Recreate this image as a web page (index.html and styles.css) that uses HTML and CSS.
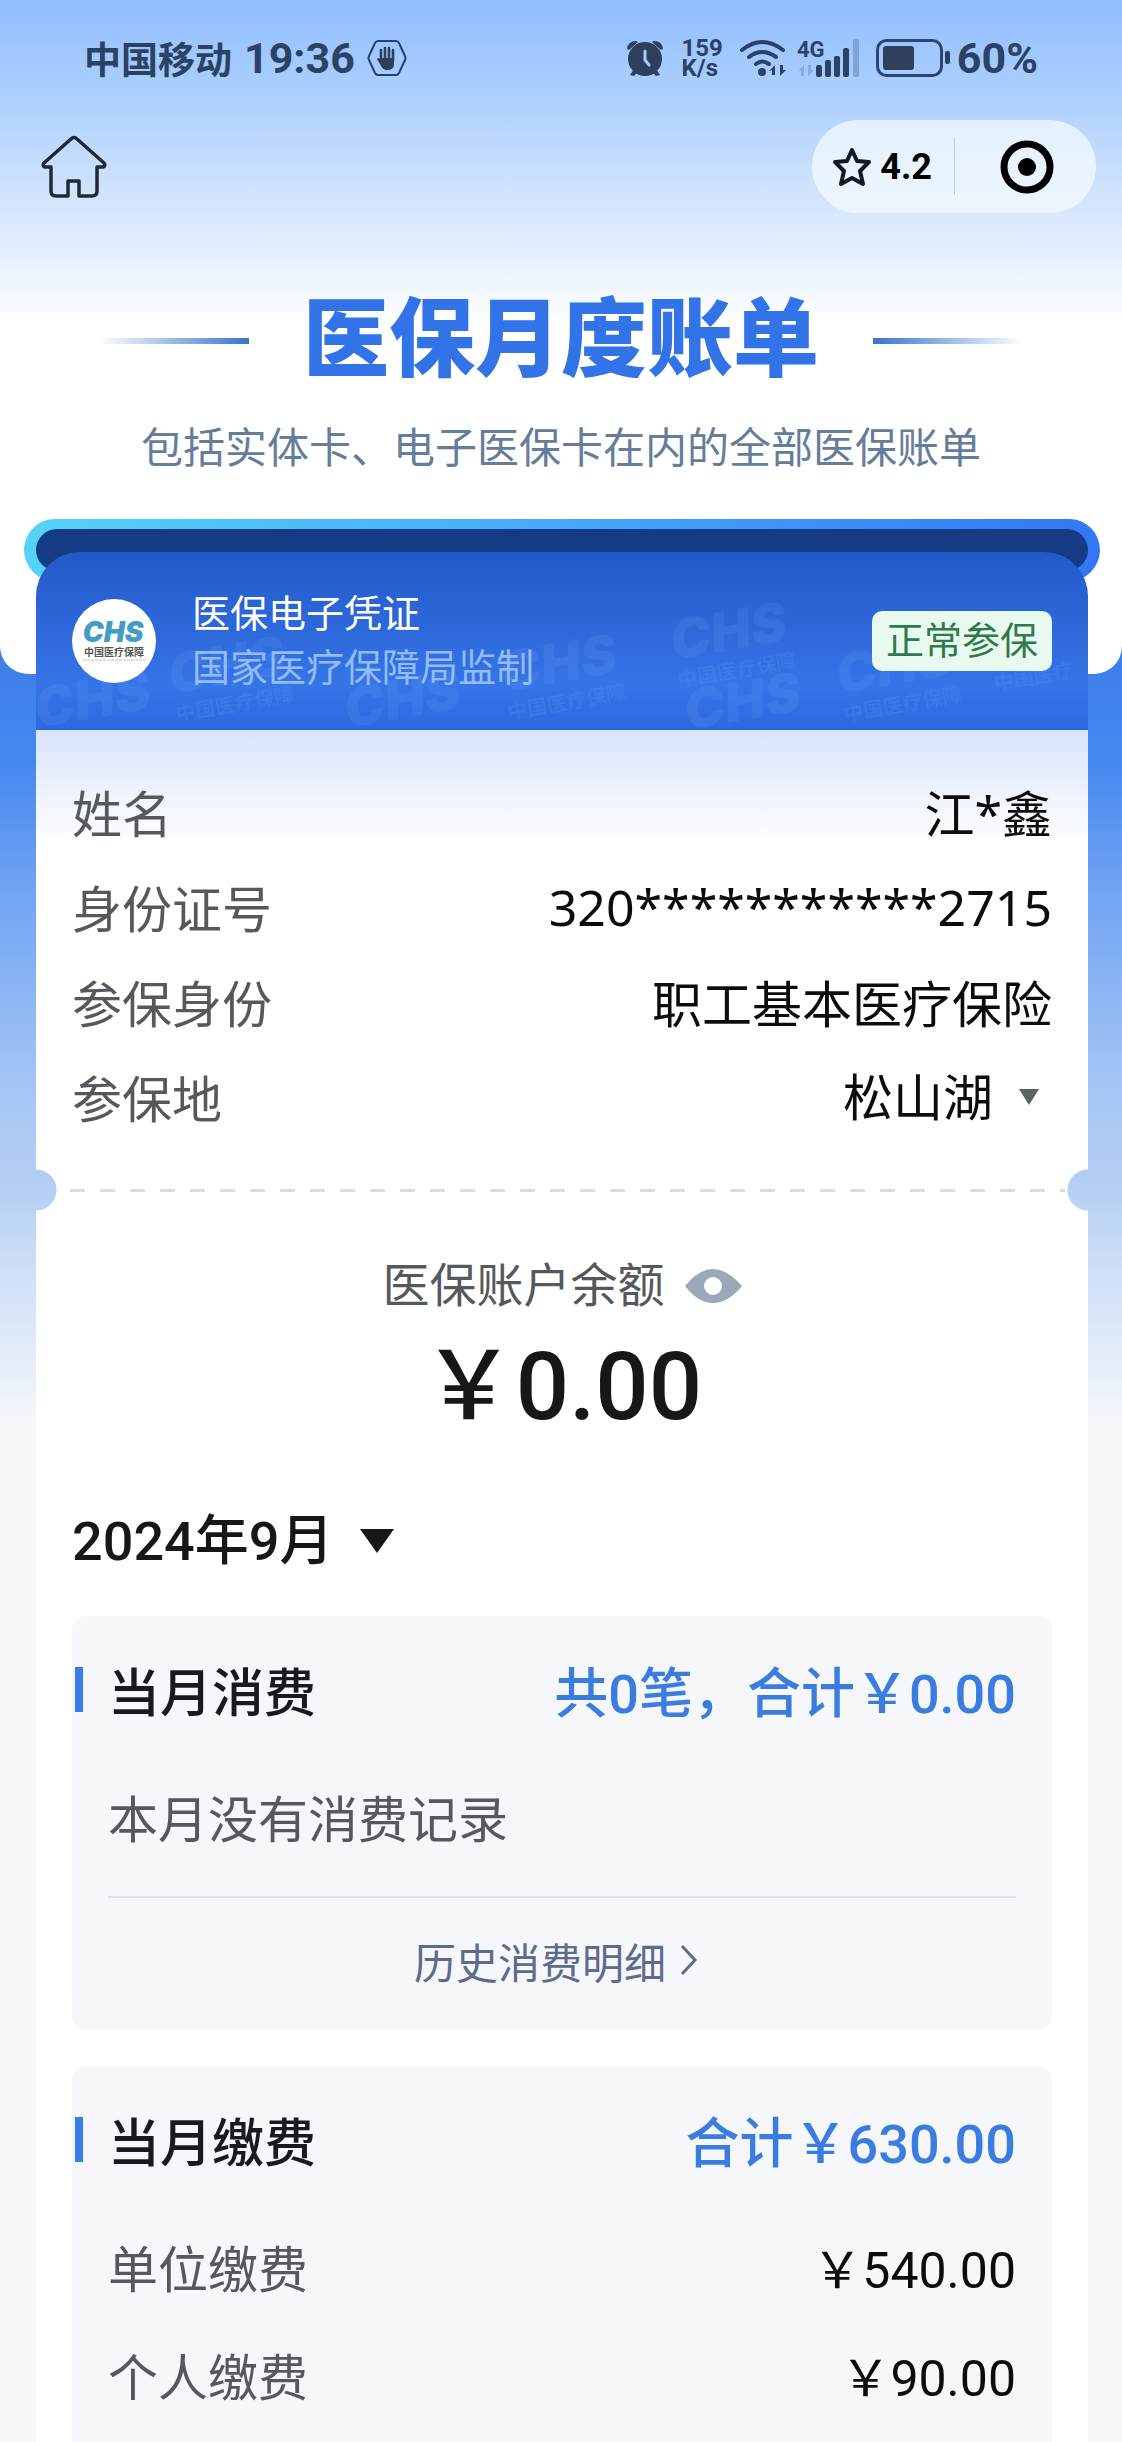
FILE: index.html
```html
<!DOCTYPE html>
<html lang="zh-CN">
<head>
  <meta charset="UTF-8">
  <meta name="viewport" content="width=device-width, initial-scale=1">
  <title>医保月度账单</title>
  <link rel="stylesheet" href="styles.css">
</head>
<body>
  <header class="top">
    <div class="status-bar">
      <span class="carrier">中国移动</span>
      <span class="status-num">19:36</span>
      <svg class="hand-icon" width="40" height="36" viewBox="0 0 40 36">
        <path d="M11 1h18q2 0 3 2l6 13q1 2 0 4l-6 13q-1 2-3 2H11q-2 0-3-2L2 20q-1-2 0-4L8 3q1-2 3-2z" fill="none" stroke="#26416e" stroke-width="2"/>
        <path d="M14 21V10M18 19V8M22 19V8M26 21V10" stroke="#2c405c" stroke-width="2.6" stroke-linecap="round"/>
        <path d="M13 18h14v6q0 6-7 6-4 0-6-4l-4-7q1-2 3 0z" fill="#2c405c"/>
      </svg>

      <div class="status-right">
        <svg width="38" height="37" viewBox="0 0 38 37" fill="#2c405c">
          <circle cx="19" cy="19" r="17"/>
          <path d="M1 9q1-8 9-8l2 1-9 8zM37 9q-1-8-9-8l-2 1 9 8zM8 29l4 3-4 4-4-1zM30 29l-4 3 4 4 4-1z"/>
          <path d="M19 11v9l4 5" fill="none" stroke="#a6cafd" stroke-width="3" stroke-linecap="round"/>
        </svg>
        <span class="net-speed">159<br>K/s</span>
        <svg width="48" height="38" viewBox="0 0 48 38">
          <g fill="none" stroke="#2c4263" stroke-width="4" stroke-linecap="round">
            <path d="M3 11Q23-5 44 11"/>
            <path d="M10 18Q23 8 37 18"/>
            <path d="M17 25q6-5 13 0"/>
          </g>
          <circle cx="23" cy="33" r="4" fill="#2c4263"/>
          <path d="M30 32l6-6v10h-3v-5zM47 31l-6 6V26h3v5z" fill="#2c4263"/>
        </svg>
        <svg class="signal" width="63" height="38" viewBox="0 0 63 38" fill="#2c4263">
          <text x="0" y="18" class="net-type">4G</text>
          <path d="M1 32l6-6v11H4v-6zM17 31l-6 6V26h3v5z" fill="#86aade"/>
          <rect x="19" y="26" width="6" height="12" rx="2"/>
          <rect x="28" y="21" width="6" height="17" rx="2"/>
          <rect x="37" y="17" width="6" height="21" rx="2"/>
          <rect x="46" y="9" width="6" height="29" rx="2"/>
          <rect x="56" y="0" width="6" height="38" rx="2" fill="#7ea4d9"/>
        </svg>
        <svg class="battery" width="75" height="38" viewBox="0 0 75 38">
          <rect x="1.500" y="1.500" width="64" height="35" rx="9" fill="none" stroke="#2c4674" stroke-width="3"/>
          <rect x="7" y="7" width="31" height="24" rx="3" fill="#30405a"/>
          <rect x="69" y="12" width="5" height="13" rx="2" fill="#2c4263"/>
        </svg>
        <span class="status-num">60%</span>
      </div>
    </div>

    <nav class="nav-bar">
      <a class="home" href="#" aria-label="首页">
        <svg width="66" height="64" viewBox="0 0 66 64" fill="none" stroke="#1f2a33" stroke-width="3.500" stroke-linejoin="round">
          <path d="M10 32H4q-3-1-1-4L30 4q3-3 6 0l27 24q2 3-1 4h-6v24q0 5-5 5H38V46H27v15H15q-5 0-5-5z"/>
        </svg>
      </a>
      <div class="capsule">
        <button class="rate" type="button">
          <svg width="40" height="40" viewBox="0 0 40 40" fill="none" stroke="#111a20" stroke-width="4" stroke-linejoin="round">
            <path d="M20 3l5 11 12 1-9 9 3 13-11-6-11 6 3-13-9-9 12-1z"/>
          </svg>
          4.2
        </button>
        <button class="close" type="button" aria-label="关闭">
          <svg width="54" height="54" viewBox="0 0 54 54">
            <circle cx="27" cy="27" r="23" fill="none" stroke="#000" stroke-width="7"/>
            <circle cx="27" cy="27" r="9"/>
          </svg>
        </button>
      </div>
    </nav>

    <div class="hero">
      <h1>医保月度账单</h1>
      <p>包括实体卡、电子医保卡在内的全部医保账单</p>
    </div>
  </header>

  <main class="wallet">
    <div class="slot"></div>

    <div class="card">
      <section class="card-head">
        <svg class="watermark" viewBox="0 0 1052 178" preserveAspectRatio="xMidYMid slice" aria-hidden="true">
          <g transform="translate(2 176) rotate(-10)"><text class="wm-big">CHS</text></g>
          <g transform="translate(136 142) rotate(-10)"><text class="wm-big">CHS</text><text y="28" class="wm-small">中国医疗保障</text></g>
          <g transform="translate(312 176) rotate(-10)"><text class="wm-big">CHS</text></g>
          <g transform="translate(468 140) rotate(-10)"><text class="wm-big">CHS</text><text y="28" class="wm-small">中国医疗保障</text></g>
          <g transform="translate(638 108) rotate(-10)"><text class="wm-big">CHS</text><text y="28" class="wm-small">中国医疗保障</text></g>
          <g transform="translate(652 178) rotate(-10)"><text class="wm-big">CHS</text></g>
          <g transform="translate(804 142) rotate(-10)"><text class="wm-big">CHS</text><text y="28" class="wm-small">中国医疗保障</text></g>
          <g transform="translate(930 146) rotate(-10)"><text x="30" y="-2" class="wm-small">中国医疗</text></g>
        </svg>
        <svg class="logo" width="84" height="84" viewBox="0 0 84 84">
          <circle cx="42" cy="42" r="42" fill="#fff"/>
          <text x="41" y="43" class="logo-name">CHS</text>
          <text x="42" y="57" class="logo-cn">中国医疗保障</text>
          <path d="M11 61h62" stroke="#b9b9b9" stroke-dasharray="3 1"/>
        </svg>
        <div class="issuer">
          <div>医保电子凭证</div>
          <div class="issuer-sub">国家医疗保障局监制</div>
        </div>
        <span class="badge">正常参保</span>
      </section>

      <section class="info">
        <div class="row"><span class="label">姓名</span><span>江*鑫</span></div>
        <div class="row"><span class="label">身份证号</span><span>320***********2715</span></div>
        <div class="row"><span class="label">参保身份</span><span>职工基本医疗保险</span></div>
        <div class="row">
          <label class="label" for="place">参保地</label>
          <div class="picker place">
            <select id="place"><option>松山湖</option></select>
            <svg width="20" height="16" viewBox="0 0 20 16"><path d="M0 0h20L10 16z" fill="#5c6266"/></svg>
          </div>
        </div>
      </section>

      <div class="tear"><div class="dashes"></div></div>

      <section class="bill">
        <div class="balance-label">
          医保账户余额
          <button type="button" aria-label="显示或隐藏余额">
            <svg width="57" height="34" viewBox="0 0 57 34">
              <path d="M0 17Q14 0 28 0t29 17Q43 34 28 34T0 17zM28 8a9 9 0 1 0 0 18 9 9 0 1 0 0-18z" fill="#9ca8b7" fill-rule="evenodd"/>
            </svg>
          </button>
        </div>
        <div class="balance">&#xFFE5;0.00</div>

        <div class="picker month">
          <select aria-label="账单月份"><option>2024年9月</option></select>
          <svg width="34" height="24" viewBox="0 0 34 24"><path d="M0 0h34L17 24z" fill="#171717"/></svg>
        </div>

        <div class="panel">
          <div class="panel-title">
            <h2>当月消费</h2>
            <span class="sum">共0笔&#xFF0C;合计&#xFFE5;0.00</span>
          </div>
          <div class="panel-row"><span class="label">本月没有消费记录</span></div>
          <a class="more" href="#">
            历史消费明细
            <svg width="18" height="30" viewBox="0 0 18 30" fill="none" stroke="#5d6c8d" stroke-width="3"><path d="M2 1l13 14L2 29"/></svg>
          </a>
        </div>

        <div class="panel panel-last">
          <div class="panel-title">
            <h2>当月缴费</h2>
            <span class="sum">合计&#xFFE5;630.00</span>
          </div>
          <div class="panel-row"><span class="label">单位缴费</span><span>&#xFFE5;540.00</span></div>
          <div class="panel-row"><span class="label">个人缴费</span><span>&#xFFE5;90.00</span></div>
        </div>
      </section>
    </div>
  </main>
</body>
</html>
```
FILE: styles.css
```css
* {
  box-sizing: border-box;
}

body {
  margin: 0;
  font-family: Roboto, "Noto Sans CJK SC", sans-serif;
  font-size: 50px;
  color: #0c0c0c;
  background: #f5f7fb linear-gradient(#3b79e8 600px, #4488f0 760px, #74a6f3 900px, #a8c7f5 1100px, #b5cff4 1190px, #c9dcf6 1250px, #f5f7fb 1420px) no-repeat;
}

h1, h2, p {
  margin: 0;
}

button, select {
  font: inherit;
  color: inherit;
  background: none;
  border: 0;
  padding: 0;
  margin: 0;
}

svg {
  display: block;
  flex-shrink: 0;
}

a {
  text-decoration: none;
}

/* top area */
.top {
  height: 674px;
  border-radius: 0 0 28px 28px;
  background: linear-gradient(#90beff, #b0d1ff 105px, #d0e3fd 190px, #e8f2ff 265px, #fff 325px);
}

.status-bar {
  display: flex;
  align-items: center;
  height: 116px;
  padding: 0 84px;
  color: #2c4263;
  font-weight: 700;
}

.carrier {
  font-size: 37px;
}

.status-num {
  font-size: 43px;
}

.carrier + .status-num {
  margin-left: 12px;
}

.hand-icon {
  margin-left: 12px;
}

.status-right {
  display: flex;
  align-items: center;
  margin-left: auto;
}

.net-speed {
  font-size: 24px;
  line-height: 20px;
  margin: 0 16px 0 18px;
}

.signal {
  margin: 0 16px 0 10px;
  overflow: visible;
}

.net-type {
  font-size: 22px;
}

.battery {
  margin-right: 6px;
}

.nav-bar {
  display: flex;
  justify-content: space-between;
  align-items: center;
  padding: 4px 26px 0 41px;
}

.capsule {
  display: flex;
  align-items: center;
  height: 93px;
  border-radius: 47px;
  background: rgba(247, 252, 255, 0.7);
}

.rate {
  display: flex;
  align-items: center;
  gap: 8px;
  height: 57px;
  padding: 0 22px 0 20px;
  border-right: 1px solid #b9cfe8;
  font-size: 36px;
  font-weight: 700;
  color: #000;
}

.close {
  padding: 0 42px 0 45px;
}

.hero {
  margin-top: 85px;
  text-align: center;
}

.hero h1 {
  display: flex;
  align-items: center;
  justify-content: center;
  gap: 54px;
  font-size: 86px;
  line-height: 86px;
  font-weight: 900;
  color: #3273e8;
}

.hero h1::before,
.hero h1::after {
  content: "";
  width: 150px;
  height: 6px;
  background: linear-gradient(to right, transparent, #3a74c8);
}

.hero h1::after {
  background: linear-gradient(to left, transparent, #3a74c8);
}

.hero p {
  margin-top: 40px;
  font-size: 42px;
  line-height: 50px;
  color: #647d9b;
}

/* card sliding out of the slot */
.wallet {
  margin-top: -155px;
}

.slot {
  height: 62px;
  margin: 0 22px 0 24px;
  padding: 10px 12px;
  border-radius: 31px;
  background: linear-gradient(to right, #56d2f8, #46a9fb 50%, #3277f5);
}

.slot::before {
  content: "";
  display: block;
  height: 42px;
  border-radius: 21px;
  background: #143b84;
}

.card {
  position: relative;
  margin: -29px 34px 0 36px;
}

.card-head {
  position: relative;
  display: flex;
  align-items: center;
  height: 178px;
  padding: 0 36px;
  border-radius: 44px 44px 0 0;
  background: linear-gradient(#2259c8, #3674e8 75%, #2d69de);
  overflow: hidden;
}

.watermark {
  position: absolute;
  inset: 0;
  width: 100%;
  height: 100%;
  fill: rgba(130, 185, 255, 0.12);
}

.wm-big {
  font: italic 900 54px Inter, sans-serif;
}

.wm-small {
  font-size: 20px;
  font-weight: 700;
}

.logo, .issuer, .badge {
  position: relative;
}

.logo-name {
  font: italic 900 28px Inter, sans-serif;
  fill: #419cc8;
  text-anchor: middle;
}

.logo-cn {
  font-size: 10px;
  font-weight: 700;
  fill: #555;
  text-anchor: middle;
}

.issuer {
  margin-left: 36px;
  font-size: 38px;
  line-height: 54px;
  color: #fff;
}

.issuer-sub {
  color: #92bdf8;
}

.badge {
  margin-left: auto;
  padding: 0 14px;
  border-radius: 10px;
  font-size: 38px;
  line-height: 60px;
  color: #2f7a4b;
  background: #e8faf0;
}

.info {
  padding: 34px 36px 3px;
  background: linear-gradient(#d9e4fb, #fff 115px);
}

.row {
  display: flex;
  justify-content: space-between;
  align-items: center;
  height: 95px;
  font-family: "Noto Sans", "Noto Sans CJK SC", sans-serif;
}

.label {
  color: #55595d;
}

.picker {
  display: flex;
  align-items: center;
}

.picker select {
  appearance: none;
  cursor: pointer;
}

.place {
  gap: 26px;
  padding-right: 13px;
}

/* half round notches on both edges */
.tear {
  display: flex;
  align-items: center;
  height: 86px;
  padding: 0 23px 0 34px;
  background:
    radial-gradient(circle at 0 50%, transparent 20px, #fff 21px) left / 50% 100% no-repeat,
    radial-gradient(circle at 100% 50%, transparent 20px, #fff 21px) right / 50% 100% no-repeat;
}

.dashes {
  flex: 1;
  height: 3px;
  background: repeating-linear-gradient(to right, #dcdcdc 0 15px, transparent 15px 30px);
}

.bill {
  padding: 24px 36px 0;
  background: #fff;
}

.balance-label {
  display: flex;
  align-items: center;
  justify-content: center;
  gap: 20px;
  font-size: 47px;
  line-height: 58px;
  color: #55595d;
}

.balance {
  margin-top: 17px;
  font-size: 94px;
  line-height: 110px;
  font-weight: 500;
  text-align: center;
  color: #171717;
}

.month {
  gap: 26px;
  height: 70px;
  margin-top: 64px;
  font-size: 54px;
  font-weight: 500;
  color: #171717;
}

.panel {
  margin-top: 40px;
  padding: 40px 36px 0;
  border-radius: 14px;
  background: #f5f7fb;
}

.panel-last {
  margin-top: 36px;
  padding-bottom: 12px;
  border-radius: 14px 14px 0 0;
}

.panel-title {
  display: flex;
  align-items: center;
  justify-content: space-between;
  height: 70px;
  margin-bottom: 38px;
  padding-bottom: 4px;
  font-size: 54px;
  font-weight: 500;
}

.panel-title h2 {
  display: flex;
  align-items: center;
  gap: 25px;
  margin-left: -33px;
  font-size: 52px;
  font-weight: 500;
  color: #171a1e;
}

.panel-title h2::before {
  content: "";
  width: 8px;
  height: 45px;
  background: #3b7cec;
}

.sum {
  color: #3b7ce0;
}

.panel-row {
  display: flex;
  align-items: center;
  justify-content: space-between;
  height: 108px;
  padding-bottom: 4px;
}

.more {
  display: flex;
  align-items: center;
  justify-content: center;
  gap: 14px;
  height: 134px;
  margin-top: 24px;
  padding: 0 12px 8px 0;
  border-top: 2px solid #dfe2e8;
  font-size: 42px;
  color: #5d6c8d;
}
```
